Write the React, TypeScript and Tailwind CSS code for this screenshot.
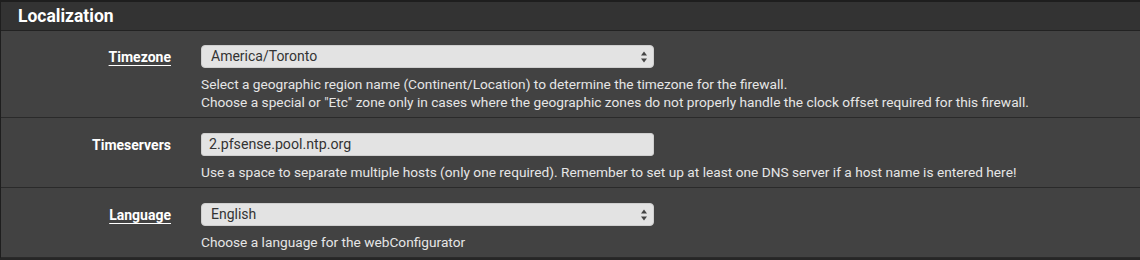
import React from "react";

function Arrows() {
  return (
    <svg width="8" height="14" viewBox="0 0 8 14" className="absolute right-[5px] top-1/2 -translate-y-1/2">
      <path d="M4 1.5 L7 5.5 L1 5.5 Z" fill="#444" />
      <path d="M4 12.5 L7 8.5 L1 8.5 Z" fill="#444" />
    </svg>
  );
}

function Select({ value }: { value: string }) {
  return (
    <div className="relative h-[23px] w-[453px] rounded-[4px] bg-[#e3e3e3] border border-[#cfcfcf] pl-[9px] flex items-center text-[14px] text-[#333]">
      {value}
      <Arrows />
    </div>
  );
}

function Input({ value }: { value: string }) {
  return (
    <div className="h-[23px] w-[453px] rounded-[3px] bg-[#e3e3e3] border border-[#cfcfcf] pl-[7px] flex items-center text-[14.2px] text-[#333]">
      {value}
    </div>
  );
}

function Row({
  label,
  underline,
  first,
  children,
  help,
}: {
  label: string;
  underline?: boolean;
  first?: boolean;
  children: React.ReactNode;
  help: string[];
}) {
  return (
    <div className={"flex border-b border-[#2a2a2a] pb-[6px] " + (first ? "pt-[14px]" : "pt-[15px]")}>
      <div className="w-[170px] shrink-0 text-right">
        <span className={"text-[14px] font-bold text-white leading-[21px] " + (underline ? "underline underline-offset-[3px]" : "")}>
          {label}
        </span>
      </div>
      <div className="pl-[30px]">
        {children}
        <div className="mt-[7px] text-[13.7px] leading-[18px] text-[#e6e6e6]">
          {help.map((h, i) => (
            <div key={i}>{h}</div>
          ))}
        </div>
      </div>
    </div>
  );
}

export default function App() {
  return (
    <div className="w-[1140px] h-[260px] bg-[#262626] overflow-hidden" style={{ fontFamily: "Roboto, 'Liberation Sans', sans-serif" }}>
      <div className="border-t-2 border-l border-[#1e1e1e] bg-[#424242]">
        <div className="h-[29px] bg-[#333333] border-b border-[#222] pl-[17px] flex items-center">
          <span className="text-[17.5px] font-bold text-white">Localization</span>
        </div>
        <Row
          label="Timezone"
          underline
          first
          help={[
            "Select a geographic region name (Continent/Location) to determine the timezone for the firewall.",
            'Choose a special or "Etc" zone only in cases where the geographic zones do not properly handle the clock offset required for this firewall.',
          ]}
        >
          <Select value="America/Toronto" />
        </Row>
        <Row
          label="Timeservers"
          help={[
            "Use a space to separate multiple hosts (only one required). Remember to set up at least one DNS server if a host name is entered here!",
          ]}
        >
          <Input value="2.pfsense.pool.ntp.org" />
        </Row>
        <Row label="Language" underline help={["Choose a language for the webConfigurator"]}>
          <Select value="English" />
        </Row>
      </div>
    </div>
  );
}
